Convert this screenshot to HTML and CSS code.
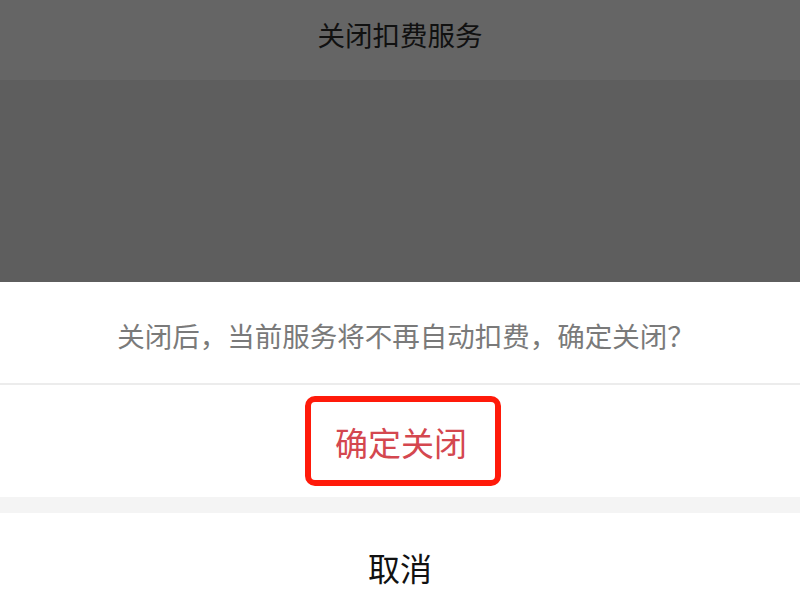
FILE: index.html
```html
<!DOCTYPE html>
<html lang="zh-CN">
<head>
<meta charset="utf-8">
<link rel="stylesheet" href="styles.css">
</head>
<body>
<div class="page">
  <header class="topbar">
    <h1 class="title">关闭扣费服务</h1>
  </header>
  <div class="dim"></div>
  <section class="sheet">
    <div class="message">关闭后，当前服务将不再自动扣费，确定关闭？</div>
    <div class="confirm-row">
      <span class="confirm">确定关闭</span>
    </div>
    <div class="gap"></div>
    <div class="cancel-row">取消</div>
  </section>
</div>
</body>
</html>
```

FILE: styles.css
```css
* { box-sizing: border-box; }
html, body { margin: 0; padding: 0; }
body {
  width: 800px;
  height: 600px;
  overflow: hidden;
  font-family: "Noto Sans CJK SC", "Noto Sans", sans-serif;
  background: #ffffff;
}
.page {
  display: flex;
  flex-direction: column;
  height: 600px;
}
.topbar {
  height: 80px;
  background: #656565;
  display: flex;
  justify-content: center;
  align-items: flex-start;
}
.title {
  margin: 14px 0 0;
  font-size: 27.5px;
  font-weight: 400;
  line-height: 40px;
  color: #111111;
}
.dim {
  height: 202px;
  background: #5e5e5e;
}
.sheet {
  flex: 1;
  display: flex;
  flex-direction: column;
  background: #ffffff;
}
.message {
  height: 103px;
  display: flex;
  align-items: center;
  justify-content: center;
  padding-top: 4px;
  padding-left: 12px;
  font-size: 27.5px;
  color: #7a7a7a;
  border-bottom: 2px solid #ececec;
}
.confirm-row {
  height: 112px;
  display: flex;
  align-items: center;
  justify-content: center;
}
.confirm {
  display: inline-flex;
  align-items: center;
  justify-content: center;
  width: 196px;
  height: 90px;
  margin-left: 5px;
  border: 6px solid #ff1a0a;
  border-radius: 10px;
  font-size: 33px;
  color: #d4474f;
  line-height: 1;
  padding-top: 2px;
  padding-right: 3px;
}
.gap {
  height: 16px;
  background: #f4f4f4;
}
.cancel-row {
  flex: 1;
  display: flex;
  justify-content: center;
  align-items: flex-start;
  padding-top: 32px;
  font-size: 32px;
  line-height: 44px;
  color: #111111;
}
```
